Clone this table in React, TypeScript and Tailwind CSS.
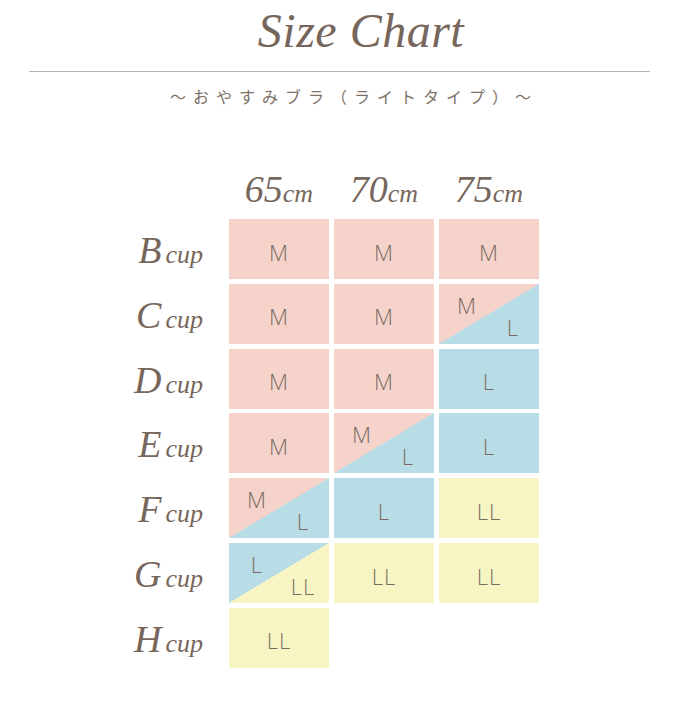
import React from "react";

const P = "bg-[#f5d3cb]";
const B = "bg-[#b8dde6]";
const Y = "bg-[#f8f5c5]";
const PB = "bg-[linear-gradient(to_bottom_right,#f5d3cb_50%,#b8dde6_50%)]";
const BY = "bg-[linear-gradient(to_bottom_right,#b8dde6_50%,#f8f5c5_50%)]";

type Cell =
  | { kind: "solid"; bg: string; t: string }
  | { kind: "split"; bg: string; t1: string; t2: string }
  | null;

const s = (bg: string, t: string): Cell => ({ kind: "solid", bg, t });
const sp = (bg: string, t1: string, t2: string): Cell => ({ kind: "split", bg, t1, t2 });

const rows: { label: string; cells: Cell[] }[] = [
  { label: "B", cells: [s(P, "M"), s(P, "M"), s(P, "M")] },
  { label: "C", cells: [s(P, "M"), s(P, "M"), sp(PB, "M", "L")] },
  { label: "D", cells: [s(P, "M"), s(P, "M"), s(B, "L")] },
  { label: "E", cells: [s(P, "M"), sp(PB, "M", "L"), s(B, "L")] },
  { label: "F", cells: [sp(PB, "M", "L"), s(B, "L"), s(Y, "LL")] },
  { label: "G", cells: [sp(BY, "L", "LL"), s(Y, "LL"), s(Y, "LL")] },
  { label: "H", cells: [s(Y, "LL"), null, null] },
];

const serif = "font-['Liberation_Serif','Times_New_Roman',serif] italic";
const sans = "font-['Open_Sans','Liberation_Sans',sans-serif] font-light tracking-[1px]";

function CellView({ c }: { c: Cell }) {
  if (!c) return <div className="h-[60px] w-[100px]" />;
  if (c.kind === "solid") {
    return (
      <div className={`h-[60px] w-[100px] ${c.bg} flex items-center justify-center pt-[5px] ${sans} text-[22px] leading-none text-[#7a6c63]`}>
        {c.t}
      </div>
    );
  }
  return (
    <div className={`relative h-[60px] w-[100px] ${c.bg} ${sans} text-[22px] leading-none text-[#7a6c63]`}>
      <span className="absolute left-[28px] top-[21px] -translate-x-1/2 -translate-y-1/2">{c.t1}</span>
      <span className="absolute left-[74px] top-[43px] -translate-x-1/2 -translate-y-1/2">{c.t2}</span>
    </div>
  );
}

export default function App() {
  return (
    <div className="w-[678px] h-[706px] bg-white flex flex-col items-center text-[#76665b]">
      <h1 className={`${serif} mt-[7px] pl-[44px] text-[48px] leading-none tracking-[0.5px] font-normal`}>Size Chart</h1>
      <div className="mt-[16px] h-px w-[621px] bg-[#bab3ac]" />
      <div className="mt-[16px] pl-[30px] font-['Noto_Sans_CJK_JP',sans-serif] font-normal text-[16px] leading-none tracking-[7px] text-[#7d7168]">
        ～おやすみブラ（ライトタイプ）～
      </div>
      <div className="mt-[65px] flex w-[678px] pl-[129px]">
        <div className="flex w-[100px] flex-col">
          <div className="h-[50px]" />
          <div className="grid auto-rows-[60px] gap-y-[4.83px]">
            {rows.map((r) => (
              <div key={r.label} className={`flex items-center justify-end pr-[26px] pt-[2px] ${serif}`}>
                <div className="flex items-baseline">
                  <span className="text-[38px] leading-none">{r.label}</span>
                  <span className="ml-[4px] text-[26px] leading-none">cup</span>
                </div>
              </div>
            ))}
          </div>
        </div>
        <div className="flex flex-col">
          <div className="grid h-[50px] grid-cols-[100px_100px_100px] gap-x-[5px]">
            {["65", "70", "75"].map((n) => (
              <div key={n} className={`flex items-end justify-center pb-[11px] ${serif}`}>
                <div className="flex items-baseline">
                  <span className="text-[38px] leading-none">{n}</span>
                  <span className="text-[26px] leading-none">cm</span>
                </div>
              </div>
            ))}
          </div>
          <div className="grid grid-cols-[100px_100px_100px] auto-rows-[60px] gap-x-[5px] gap-y-[4.83px]">
            {rows.map((r) => r.cells.map((c, i) => <CellView key={r.label + i} c={c} />))}
          </div>
        </div>
      </div>
    </div>
  );
}
